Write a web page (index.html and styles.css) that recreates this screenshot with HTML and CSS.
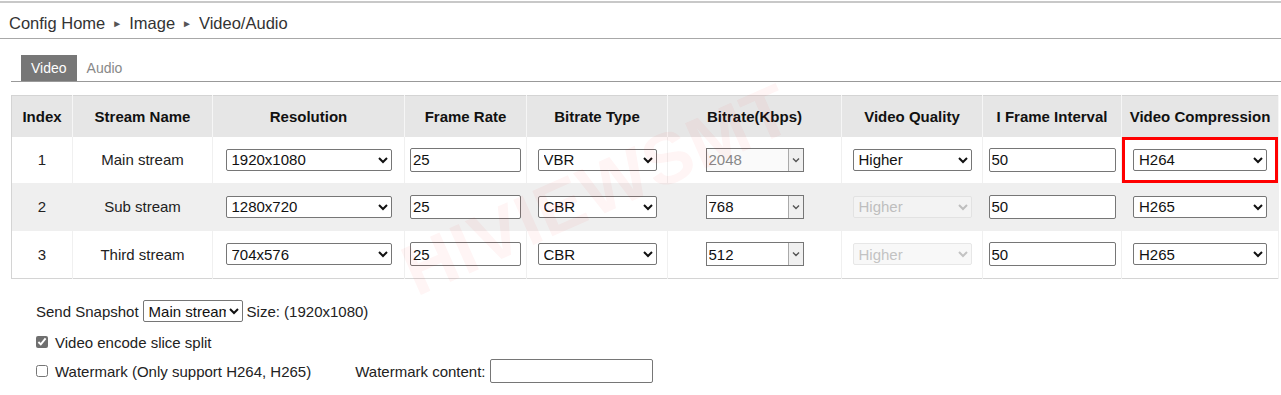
FILE: index.html
```html
<!DOCTYPE html>
<html lang="en">
<head>
    <meta charset="UTF-8">
    <title>Video/Audio</title>
    <link rel="stylesheet" href="styles.css">
</head>
<body>
    <div class="page">
        <div class="crumbs">
            <span>Config Home</span>
            <span class="arrow">&#9658;</span>
            <span>Image</span>
            <span class="arrow">&#9658;</span>
            <span>Video/Audio</span>
        </div>

        <div class="tabs">
            <span class="tab active">Video</span>
            <span class="tab">Audio</span>
        </div>

        <div class="table-wrap">
            <table class="streams">
                <colgroup>
                    <col style="width:61px">
                    <col style="width:140px">
                    <col style="width:192px">
                    <col style="width:122px">
                    <col style="width:141px">
                    <col style="width:174px">
                    <col style="width:141px">
                    <col style="width:139px">
                    <col style="width:157px">
                </colgroup>
                <thead>
                    <tr>
                        <th>Index</th>
                        <th>Stream Name</th>
                        <th>Resolution</th>
                        <th>Frame Rate</th>
                        <th>Bitrate Type</th>
                        <th>Bitrate(Kbps)</th>
                        <th>Video Quality</th>
                        <th>I Frame Interval</th>
                        <th>Video Compression</th>
                    </tr>
                </thead>
                <tbody>
                    <tr>
                        <td>1</td>
                        <td>Main stream</td>
                        <td><select class="sel res"><option>1920x1080</option></select></td>
                        <td><input class="txt fps" type="text" value="25"></td>
                        <td><select class="sel type"><option>VBR</option></select></td>
                        <td>
                            <span class="combo disabled">
                                <input type="text" value="2048" disabled>
                                <span class="drop"><svg width="8" height="6" viewBox="0 0 8 6"><path d="M1 1.5 L4 4.5 L7 1.5" fill="none" stroke="#555" stroke-width="1.4"/></svg></span>
                            </span>
                        </td>
                        <td><select class="sel quality"><option>Higher</option></select></td>
                        <td><input class="txt iframe" type="text" value="50"></td>
                        <td class="marked"><select class="sel codec"><option>H264</option></select></td>
                    </tr>
                    <tr class="alt">
                        <td>2</td>
                        <td>Sub stream</td>
                        <td><select class="sel res"><option>1280x720</option></select></td>
                        <td><input class="txt fps" type="text" value="25"></td>
                        <td><select class="sel type"><option>CBR</option></select></td>
                        <td>
                            <span class="combo">
                                <input type="text" value="768">
                                <span class="drop"><svg width="8" height="6" viewBox="0 0 8 6"><path d="M1 1.5 L4 4.5 L7 1.5" fill="none" stroke="#555" stroke-width="1.4"/></svg></span>
                            </span>
                        </td>
                        <td><select class="sel quality" disabled><option>Higher</option></select></td>
                        <td><input class="txt iframe" type="text" value="50"></td>
                        <td><select class="sel codec"><option>H265</option></select></td>
                    </tr>
                    <tr>
                        <td>3</td>
                        <td>Third stream</td>
                        <td><select class="sel res"><option>704x576</option></select></td>
                        <td><input class="txt fps" type="text" value="25"></td>
                        <td><select class="sel type"><option>CBR</option></select></td>
                        <td>
                            <span class="combo">
                                <input type="text" value="512">
                                <span class="drop"><svg width="8" height="6" viewBox="0 0 8 6"><path d="M1 1.5 L4 4.5 L7 1.5" fill="none" stroke="#555" stroke-width="1.4"/></svg></span>
                            </span>
                        </td>
                        <td><select class="sel quality" disabled><option>Higher</option></select></td>
                        <td><input class="txt iframe" type="text" value="50"></td>
                        <td><select class="sel codec"><option>H265</option></select></td>
                    </tr>
                </tbody>
            </table>
            <div class="stamp">HIVIEWSMT</div>
        </div>

        <div class="options">
            <div class="opt snap-row">
                <span>Send Snapshot</span>
                <select class="sel snap"><option>Main stream</option></select>
                <span>Size: (1920x1080)</span>
            </div>
            <div class="opt">
                <label><input type="checkbox" checked> Video encode slice split</label>
            </div>
            <div class="opt">
                <label><input type="checkbox"> Watermark (Only support H264, H265)</label>
                <span class="wm-label">Watermark content:</span>
                <input class="txt wm" type="text">
            </div>
        </div>
    </div>
</body>
</html>
```

FILE: styles.css
```css
* {
    box-sizing: border-box;
}
body {
    margin: 0;
    font-family: "Liberation Sans", Arial, sans-serif;
    color: #222;
    background: #fff;
}
.page {
    margin-top: 1px;
    border-top: 2px solid #c8c8c8;
}
.crumbs {
    height: 36px;
    padding: 6px 0 0 9px;
    display: flex;
    align-items: center;
    gap: 7px;
    font-size: 16.5px;
    color: #333;
    border-bottom: 1px solid #a8a8a8;
}
.arrow {
    font-size: 10px;
    color: #555;
}
.tabs {
    margin: 16px 0 0 11px;
    padding-left: 10px;
    display: flex;
    border-bottom: 1px solid #999;
}
.tab {
    height: 26px;
    line-height: 26px;
    padding: 0 10px;
    font-size: 14px;
    color: #888;
}
.tab.active {
    background: #777;
    color: #fff;
}
.table-wrap {
    position: relative;
    margin: 13px 0 0 11px;
    width: 1267px;
}
.streams {
    width: 1267px;
    table-layout: fixed;
    border-collapse: collapse;
    border: 1px solid #d4d4d4;
    font-size: 15px;
}
.streams th {
    height: 41px;
    background: #e6e6e6;
    font-weight: bold;
    color: #111;
    border-right: 1px solid #f6f6f6;
    white-space: nowrap;
    padding: 0;
}
.streams td {
    height: 48px;
    text-align: center;
    padding: 0;
    border-right: 1px solid #f0f0f0;
    color: #222;
}
.streams tbody tr:first-child td {
    height: 46px;
}
.streams tr.alt td {
    background: #efefef;
    border-right-color: #efefef;
}
.sel {
    height: 22px;
    font-family: "Liberation Sans", Arial, sans-serif;
    font-size: 15px;
    color: #111;
    border: 1px solid #767676;
    border-radius: 2px;
    background: #fff;
    padding: 0 0 0 1px;
    vertical-align: middle;
}
.sel:disabled {
    color: #aaa;
    border-color: #ddd;
    background: #f6f6f6;
}
.sel.res { width: 166px; }
.sel.type { width: 119px; }
.sel.quality { width: 119px; }
.sel.codec { width: 134px; }
.sel.snap { width: 100px; }
.txt {
    height: 24px;
    font-family: "Liberation Sans", Arial, sans-serif;
    font-size: 15px;
    color: #111;
    border: 1px solid #767676;
    border-radius: 2px;
    padding: 0 2px;
    background: #fff;
    vertical-align: middle;
}
.txt.fps { width: 111px; }
.txt.iframe { width: 127px; }
.combo {
    display: inline-flex;
    width: 98px;
    height: 24px;
    border: 1px solid #767676;
    vertical-align: middle;
    background: #fff;
}
.combo input {
    width: 81px;
    border: none;
    padding: 0 2px;
    font-family: "Liberation Sans", Arial, sans-serif;
    font-size: 15px;
    color: #111;
    background: #fff;
    outline: none;
}
.combo.disabled input {
    color: #888;
    background: #fafafa;
}
.drop {
    flex: 1;
    display: flex;
    align-items: center;
    justify-content: center;
    border-left: 1px solid #aaa;
    background: #f0f0f0;
}
.marked {
    box-shadow: inset 0 0 0 3px #f00;
}
.stamp {
    position: absolute;
    left: 410px;
    top: 140px;
    font-size: 72px;
    line-height: 1;
    font-weight: bold;
    letter-spacing: 1px;
    color: rgba(255, 30, 30, 0.045);
    transform: rotate(-24deg);
    transform-origin: left bottom;
    pointer-events: none;
    white-space: nowrap;
}
.options {
    margin-top: 20px;
    padding-left: 36px;
    font-size: 15px;
    color: #222;
    display: flex;
    flex-direction: column;
    gap: 5px;
}
.opt {
    height: 24px;
    display: flex;
    align-items: center;
    gap: 4px;
}
.snap-row {
    margin-bottom: 2px;
}
.opt label {
    display: flex;
    align-items: center;
    gap: 7px;
}
.opt input[type="checkbox"] {
    margin: 0;
    width: 12px;
    height: 12px;
    accent-color: #6f6f6f;
}
.wm-label {
    margin-left: 40px;
}
.txt.wm {
    width: 163px;
}
```
